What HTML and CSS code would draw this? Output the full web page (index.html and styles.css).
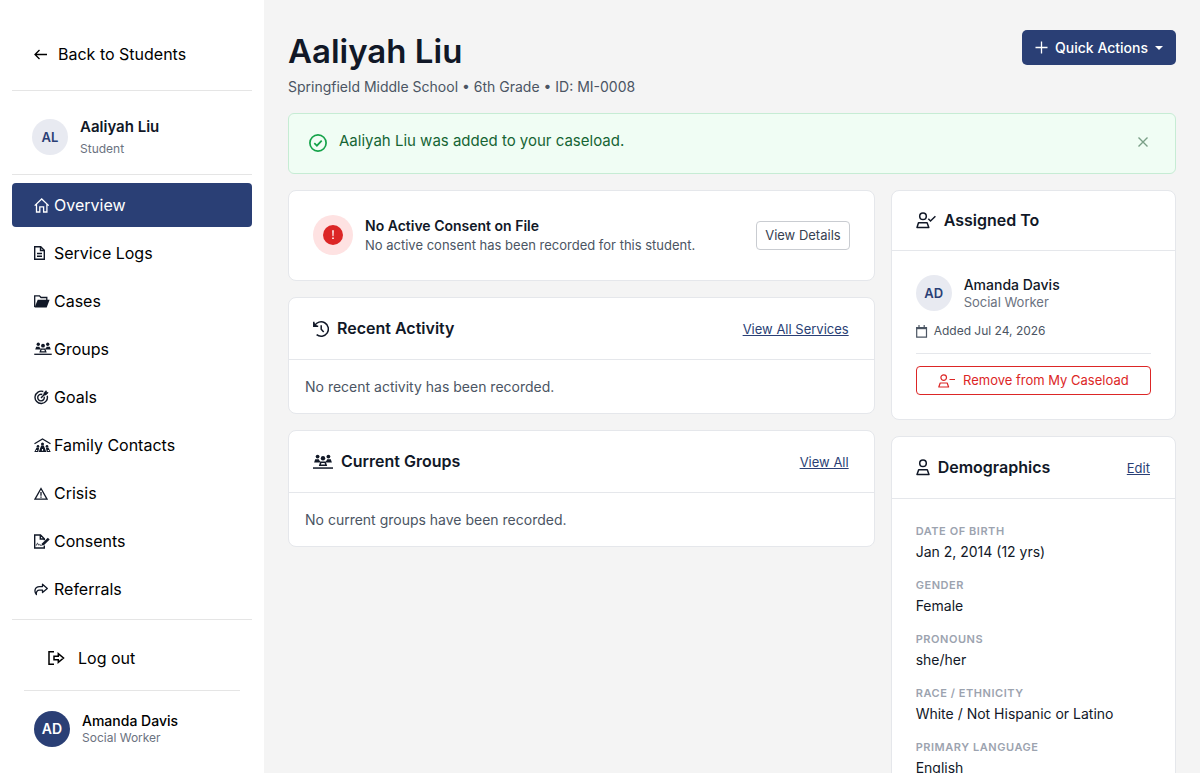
FILE: index.html
```html
<!DOCTYPE html>
<html lang="en">

<head>
    <meta charset="UTF-8">
    <meta name="viewport" content="width=device-width, initial-scale=1.0">
    <title>Aaliyah Liu - Overview</title>
    <link rel="stylesheet" href="styles.css">
</head>

<body>

    <!-- Shared icons -->
    <svg class="sprite" aria-hidden="true">
        <symbol id="icon-groups" viewBox="0 0 20 16">
            <g fill="currentColor">
                <circle cx="4.6" cy="2.6" r="1.9" />
                <circle cx="15.4" cy="2.6" r="1.9" />
                <circle cx="10" cy="4.2" r="2.2" />
                <path d="M2.200 5.300h3.600c.5 1.300 1 2 1.700 2.600L6.700 8.600H1.100z" />
                <path d="M17.800 5.300h-3.600c-.5 1.300-1 2-1.700 2.600l.8.7h5.600z" />
                <path fill-rule="evenodd" d="M7.300 7.400h5.400l1.500 4.600H5.800zM8.400 8.900l-.5 1.700h4.200l-.5-1.700z" />
                <path d="M0 13.300h20v1.500H0z" />
            </g>
        </symbol>
        <symbol id="icon-person" viewBox="0 0 14 17">
            <g fill="none" stroke="currentColor" stroke-width="1.500">
                <circle cx="7" cy="4.200" r="3.300" />
                <path d="M2.700 10.700h8.600l1.700 4.800H1z" stroke-linejoin="round" />
            </g>
        </symbol>
    </svg>

    <div class="app">
        <aside class="sidebar">
            <a class="back-link" href="#">
                <svg width="14" height="14" viewBox="0 0 14 14" fill="none" stroke="currentColor" stroke-width="1.300">
                    <path d="M13 7.500H1M5.500 3L1 7.500 5.500 12" />
                </svg>
                Back to Students
            </a>

            <div class="student">
                <span class="avatar">AL</span>
                <div>
                    <div class="student-name">Aaliyah Liu</div>
                    <div class="student-role">Student</div>
                </div>
            </div>

            <nav class="menu">
                <a class="menu-item active" href="#">
                    <svg width="16" height="16" viewBox="0 0 16 16" fill="none" stroke="currentColor" stroke-width="1.300">
                        <path d="M.7 8.600L7.700 2l7 6.600M2.500 7.300V15h3.300V9.900h3.800V15h3.300V7.300" />
                    </svg>
                    Overview
                </a>
                <a class="menu-item" href="#">
                    <svg width="11" height="14" viewBox="0 0 11 14" fill="none" stroke="currentColor" stroke-width="1.400">
                        <path d="M.7.7h6l3.600 3.600v9H.7zM3 7.500h5M3 10.300h5" />
                        <path d="M6.500.7v3.800h3.800" />
                    </svg>
                    Service Logs
                </a>
                <a class="menu-item" href="#">
                    <svg width="16" height="13" viewBox="0 0 16 13">
                        <path d="M.7 12V.8h4.800l1.500 1.700h5.800V5" fill="none" stroke="currentColor" stroke-width="1.300" />
                        <path d="M3.700 4.700h11.900L12.700 12.500H.6z" fill="currentColor" />
                    </svg>
                    Cases
                </a>
                <a class="menu-item" href="#">
                    <svg width="18" height="14"><use href="#icon-groups" /></svg>
                    Groups
                </a>
                <a class="menu-item" href="#">
                    <svg width="15" height="15" viewBox="0 0 15 15" fill="none" stroke="currentColor" stroke-width="1.400">
                        <path d="M9.300 1.500A6.200 6.200 0 1 0 13.200 5.700" />
                        <path d="M8.300 4.500A3.300 3.300 0 1 0 10.200 6.700" />
                        <path d="M7 7.900l4-4.200" />
                        <path d="M10 2.900L12 .7l.6 1.500 1.500.5-2.200 2.200H10z" fill="currentColor" stroke-width=".8" />
                    </svg>
                    Goals
                </a>
                <a class="menu-item" href="#">
                    <svg width="17" height="15" viewBox="0 0 17 15">
                        <path d="M.5 5.700L8.500 1l8 4.700" fill="none" stroke="currentColor" stroke-width="1.300" />
                        <g fill="currentColor">
                            <circle cx="8.500" cy="5.900" r="1.500" />
                            <circle cx="4" cy="8.300" r="1.300" />
                            <circle cx="13" cy="8.300" r="1.300" />
                            <path fill-rule="evenodd" d="M7.200 7.500h2.600l2.500 6.500H4.700zM7.900 11v1.800h1.200V11z" />
                            <path fill-rule="evenodd" d="M2.600 9.600h2.600L4.200 14H.3zM2.200 12l-.4 1h1.200l.4-1z" />
                            <path fill-rule="evenodd" d="M14.400 9.600h-2.600l1 4.400h3.900zM14.800 12l.4 1h-1.200l-.4-1z" />
                        </g>
                    </svg>
                    Family Contacts
                </a>
                <a class="menu-item" href="#">
                    <svg width="14" height="13" viewBox="0 0 14 13" fill="none" stroke="currentColor" stroke-width="1.300">
                        <path d="M7 1.500l6 10.600H1zM7 5v3.700M7 9.600v1.200" />
                    </svg>
                    Crisis
                </a>
                <a class="menu-item" href="#">
                    <svg width="16" height="15" viewBox="0 0 16 15" fill="none" stroke="currentColor" stroke-width="1.400">
                        <path d="M10.300 11.500V14H.7V1h5.800l3.800 3.800v1.500M6.300 1v4h4" />
                        <path d="M2.300 11.500c1-3 1.600-2.500 2-1 .4 1.300 1 .6 1.500 0l.7.700h1.200" stroke-width="1" />
                        <path d="M7.700 11.600l.5-2.400 5.600-5.400 1.900 1.800-5.600 5.500z" fill="currentColor" stroke="none" />
                    </svg>
                    Consents
                </a>
                <a class="menu-item" href="#">
                    <svg width="14" height="13" viewBox="0 0 14 13" fill="none" stroke="currentColor" stroke-width="1.300" stroke-linejoin="round">
                        <path d="M8.500 1.200L13.300 5.400 8.500 9.500V7.200H5.400C3.200 7.200 2 8.800 2.400 11.500.2 9.200.2 3.600 5.400 3.600h3.100z" />
                    </svg>
                    Referrals
                </a>
            </nav>

            <div class="sidebar-footer">
                <button class="logout" type="button">
                    <svg width="17" height="14" viewBox="0 0 17 14" fill="none" stroke="currentColor" stroke-width="1.500">
                        <path d="M6 .8H1v12.400h5" />
                        <path d="M6 5.300h4.300V2.700L15.500 7l-5.200 4.300V8.700H6z" />
                    </svg>
                    Log out
                </button>
                <div class="user">
                    <span class="avatar avatar-dark">AD</span>
                    <div>
                        <div class="user-name">Amanda Davis</div>
                        <div class="user-role">Social Worker</div>
                    </div>
                </div>
            </div>
        </aside>

        <main class="content">
            <header class="page-header">
                <div>
                    <h1>Aaliyah Liu</h1>
                    <p class="subtitle">Springfield Middle School • 6th Grade • ID: MI-0008</p>
                </div>
                <button class="btn btn-primary" type="button">
                    <svg width="13" height="13" viewBox="0 0 13 13" stroke="currentColor" stroke-width="1.300">
                        <path d="M6.500.5v12M.5 6.500h12" />
                    </svg>
                    Quick Actions
                    <span class="caret"></span>
                </button>
            </header>

            <div class="alert" role="alert">
                <svg class="alert-icon" width="18" height="18" viewBox="0 0 18 18" fill="none" stroke="currentColor" stroke-width="1.700">
                    <circle cx="9" cy="9" r="8.100" />
                    <path d="M5.300 9.200l2.600 2.500 4.800-5" />
                </svg>
                <p>Aaliyah Liu was added to your caseload.</p>
                <button class="alert-close" type="button" aria-label="Close">
                    <svg width="10" height="10" viewBox="0 0 10 10" stroke="currentColor" stroke-width="1.400">
                        <path d="M.5.500l9 9M9.500.500l-9 9" />
                    </svg>
                </button>
            </div>

            <div class="grid">
                <div class="col-main">
                    <section class="card consent">
                        <span class="consent-icon">
                            <svg width="20" height="20" viewBox="0 0 20 20">
                                <circle cx="10" cy="10" r="10" fill="#dc2626" />
                                <path d="M9.200 5.200h1.600l-.3 6H9.500zM9.200 12.500h1.600v1.600H9.200z" fill="#fff" />
                            </svg>
                        </span>
                        <div class="consent-text">
                            <h2>No Active Consent on File</h2>
                            <p>No active consent has been recorded for this student.</p>
                        </div>
                        <button class="btn btn-outline" type="button">View Details</button>
                    </section>

                    <section class="card">
                        <div class="card-header with-link">
                            <h2>
                                <svg width="16" height="16" viewBox="0 0 16 16" fill="none" stroke="currentColor" stroke-width="1.500">
                                    <path d="M1.600 5A7.200 7.200 0 1 1 3.600 13.600" />
                                    <path d="M.8.800v4.400h4.400M8.200 4.200v4l2.500 2.700" />
                                    <path d="M.8 1.500v3.700h3.700z" fill="currentColor" stroke="none" />
                                </svg>
                                Recent Activity
                            </h2>
                            <a href="#">View All Services</a>
                        </div>
                        <p class="empty">No recent activity has been recorded.</p>
                    </section>

                    <section class="card">
                        <div class="card-header with-link">
                            <h2>
                                <svg width="20" height="16"><use href="#icon-groups" /></svg>
                                Current Groups
                            </h2>
                            <a href="#">View All</a>
                        </div>
                        <p class="empty">No current groups have been recorded.</p>
                    </section>
                </div>

                <div class="col-side">
                    <section class="card">
                        <div class="card-header">
                            <h2>
                                <svg width="20" height="17" viewBox="0 0 20 17" fill="none" stroke="currentColor" stroke-width="1.500">
                                    <circle cx="7" cy="4.200" r="3.300" />
                                    <path d="M2.500 10.700h8.600l1.700 4.800H1z" stroke-linejoin="round" />
                                    <path d="M12.300 6.800l2.200 2.200 4.900-4.700" />
                                </svg>
                                Assigned To
                            </h2>
                        </div>
                        <div class="card-body">
                            <div class="assignee">
                                <span class="avatar">AD</span>
                                <div>
                                    <div class="assignee-name">Amanda Davis</div>
                                    <div class="assignee-role">Social Worker</div>
                                </div>
                            </div>
                            <div class="added">
                                <svg width="12" height="13" viewBox="0 0 12 13" fill="none" stroke="currentColor">
                                    <path d="M.7 2.500h9.800v9.600H.7z" stroke-width="1.200" />
                                    <path d="M.3 3.200h10.600" stroke-width="2" />
                                    <path d="M3 0v3M8.200 0v3" stroke-width="1.200" />
                                </svg>
                                Added Jul 24, 2026
                            </div>
                            <div class="remove">
                                <button class="btn btn-danger" type="button">
                                    <svg width="17" height="14" viewBox="0 0 17 14" fill="none" stroke="currentColor" stroke-width="1.200">
                                        <circle cx="5.700" cy="3.600" r="2.800" />
                                        <path d="M2.200 9h7l1.400 4H.8zM11.500 5.500H17" stroke-linejoin="round" />
                                    </svg>
                                    Remove from My Caseload
                                </button>
                            </div>
                        </div>
                    </section>

                    <section class="card">
                        <div class="card-header with-link">
                            <h2>
                                <svg width="14" height="17"><use href="#icon-person" /></svg>
                                Demographics
                            </h2>
                            <a href="#">Edit</a>
                        </div>
                        <dl class="card-body details">
                            <dt>Date of Birth</dt>
                            <dd>Jan 2, 2014 (12 yrs)</dd>
                            <dt>Gender</dt>
                            <dd>Female</dd>
                            <dt>Pronouns</dt>
                            <dd>she/her</dd>
                            <dt>Race / Ethnicity</dt>
                            <dd>White / Not Hispanic or Latino</dd>
                            <dt>Primary Language</dt>
                            <dd>English</dd>
                        </dl>
                    </section>
                </div>
            </div>
        </main>
    </div>

</body>

</html>
```
FILE: styles.css
```css
* {
    box-sizing: border-box;
}

body {
    font-family: Inter, "Liberation Sans", sans-serif;
    font-size: 14px;
    line-height: 20px;
    margin: 0;
    color: #111827;
    background-color: #f4f4f4;
}

h1,
h2,
p,
dl,
dd {
    margin: 0;
}

a {
    color: #2a3f75;
}

svg {
    flex-shrink: 0;
}

button {
    font-family: inherit;
    cursor: pointer;
}

.sprite {
    display: none;
}

.app {
    display: flex;
    height: 100vh;
}

/* Sidebar */
.sidebar {
    flex: 0 0 264px;
    display: flex;
    flex-direction: column;
    padding: 18px 12px 0;
    background-color: white;
    overflow: hidden;
}

.back-link {
    display: flex;
    align-items: center;
    gap: 10px;
    padding: 24px 22px;
    border-bottom: 1px solid #e5e5e5;
    color: black;
    font-size: 16px;
    line-height: 24px;
    text-decoration: none;
}

.student {
    display: flex;
    align-items: center;
    gap: 12px;
    padding: 24px 20px 16px;
    border-bottom: 1px solid #e5e5e5;
}

.avatar {
    display: flex;
    flex-shrink: 0;
    align-items: center;
    justify-content: center;
    width: 36px;
    height: 36px;
    border-radius: 50%;
    background-color: #e8eaf1;
    color: #2a3f75;
    font-size: 13px;
    font-weight: 600;
}

.avatar-dark {
    background-color: #2a3f75;
    color: white;
    font-size: 14px;
}

.student-name {
    font-size: 15px;
    font-weight: 600;
    line-height: 24px;
}

.student-role,
.user-role {
    color: #6b7280;
    font-size: 12px;
    line-height: 19px;
}

.menu {
    display: flex;
    flex-direction: column;
    gap: 4px;
    padding: 8px 0;
    border-bottom: 1px solid #e5e5e5;
}

.menu-item {
    display: grid;
    grid-template-columns: 20px 1fr;
    align-items: center;
    padding: 10px 22px;
    border-radius: 4px;
    color: black;
    font-size: 16px;
    line-height: 24px;
    text-decoration: none;
}

.menu-item svg {
    color: #111827;
}

.menu-item.active,
.menu-item.active svg {
    background-color: #2a3f75;
    color: white;
}

.sidebar-footer {
    padding: 16px 12px 24px;
}

.logout {
    display: flex;
    align-items: center;
    gap: 13px;
    width: 100%;
    padding: 10px 24px 20px;
    border: none;
    border-bottom: 1px solid #e5e5e5;
    background: none;
    color: black;
    font-size: 16px;
    line-height: 24px;
}

.user {
    display: flex;
    align-items: center;
    gap: 12px;
    padding: 20px 10px 0;
}

.user-name {
    color: black;
    font-weight: 500;
    line-height: 18px;
}

.user-role {
    line-height: 16px;
}

/* Main area */
.content {
    flex: 1;
    min-width: 0;
    padding: 30px 24px 24px;
    overflow-y: auto;
    scrollbar-width: none;
}

.page-header {
    display: flex;
    justify-content: space-between;
    align-items: flex-start;
    margin-bottom: 16px;
}

h1 {
    margin-bottom: 5px;
    font-size: 33px;
    font-weight: 600;
    line-height: 42px;
}

.subtitle {
    color: #4b5563;
}

.btn {
    display: flex;
    align-items: center;
    justify-content: center;
    gap: 8px;
    border: 1px solid transparent;
    border-radius: 4px;
    background-color: white;
    font-size: 13px;
    line-height: 19px;
}

.btn-primary {
    gap: 7px;
    padding: 7px 12px;
    border-radius: 5px;
    background-color: #2a3f75;
    color: white;
    font-size: 14px;
    font-weight: 500;
}

.btn-outline {
    padding: 4px 8px;
    border-color: #c9ccd1;
    color: #374151;
}

.btn-danger {
    width: 100%;
    padding: 4px 8px;
    border-color: #dc2626;
    color: #dc2626;
}

.caret {
    border-top: 4px solid currentColor;
    border-left: 4px solid transparent;
    border-right: 4px solid transparent;
}

.alert {
    display: flex;
    align-items: flex-start;
    gap: 12px;
    margin-bottom: 16px;
    padding: 15px 20px 20px;
    border: 1px solid #c6ecd4;
    border-radius: 6px;
    background-color: #f0fdf4;
    color: #166534;
}

.alert p {
    flex: 1;
    font-size: 15px;
    line-height: 24px;
}

.alert-icon {
    margin-top: 5px;
    color: #16a34a;
}

.alert-close {
    display: flex;
    padding: 8px 7px 6px;
    border: none;
    background: none;
    color: #7a9f87;
}

.grid {
    display: grid;
    grid-template-columns: repeat(12, 1fr);
    gap: 16px;
}

.col-main,
.col-side {
    display: flex;
    flex-direction: column;
    gap: 16px;
    grid-column: span 8;
}

.col-side {
    grid-column: span 4;
}

.card {
    border: 1px solid #e5e7eb;
    border-radius: 8px;
    background-color: white;
}

.card-header {
    display: flex;
    align-items: center;
    justify-content: space-between;
    padding: 16px 24px;
    border-bottom: 1px solid #e5e7eb;
}

.card-header h2 {
    display: flex;
    align-items: center;
    gap: 8px;
    font-size: 16px;
    font-weight: 600;
    line-height: 27px;
}

.card-header.with-link {
    padding: 17px 25px 17px 24px;
}

.card-header a {
    font-size: 13px;
}

.card-body {
    padding: 24px;
}

.empty {
    padding: 16px;
    color: #4b5563;
    line-height: 21px;
}

.consent {
    display: flex;
    align-items: center;
    gap: 12px;
    padding: 24px 24px 25px;
}

.consent-icon {
    display: flex;
    flex-shrink: 0;
    align-items: center;
    justify-content: center;
    width: 40px;
    height: 40px;
    border-radius: 50%;
    background-color: #fee2e2;
}

.consent-text {
    flex: 1;
}

.consent-text h2 {
    font-size: 14px;
    font-weight: 600;
    line-height: 19px;
}

.consent-text p {
    color: #4b5563;
    font-size: 13px;
    line-height: 20px;
}

.assignee {
    display: flex;
    align-items: center;
    gap: 12px;
    margin-bottom: 10px;
}

.assignee-name {
    font-weight: 500;
    line-height: 18px;
}

.assignee-role {
    color: #6b7280;
    font-size: 13px;
    line-height: 17px;
}

.added {
    display: flex;
    align-items: center;
    gap: 6px;
    margin-bottom: 12px;
    color: #4b5563;
    font-size: 12px;
}

.remove {
    padding-top: 12px;
    border-top: 1px solid #e5e7eb;
}

.details dt {
    margin-bottom: 2px;
    color: #9ca3af;
    font-size: 11px;
    font-weight: 600;
    letter-spacing: 0.05em;
    line-height: 16px;
    text-transform: uppercase;
}

.details dd {
    margin-bottom: 14px;
    line-height: 22px;
}
```
